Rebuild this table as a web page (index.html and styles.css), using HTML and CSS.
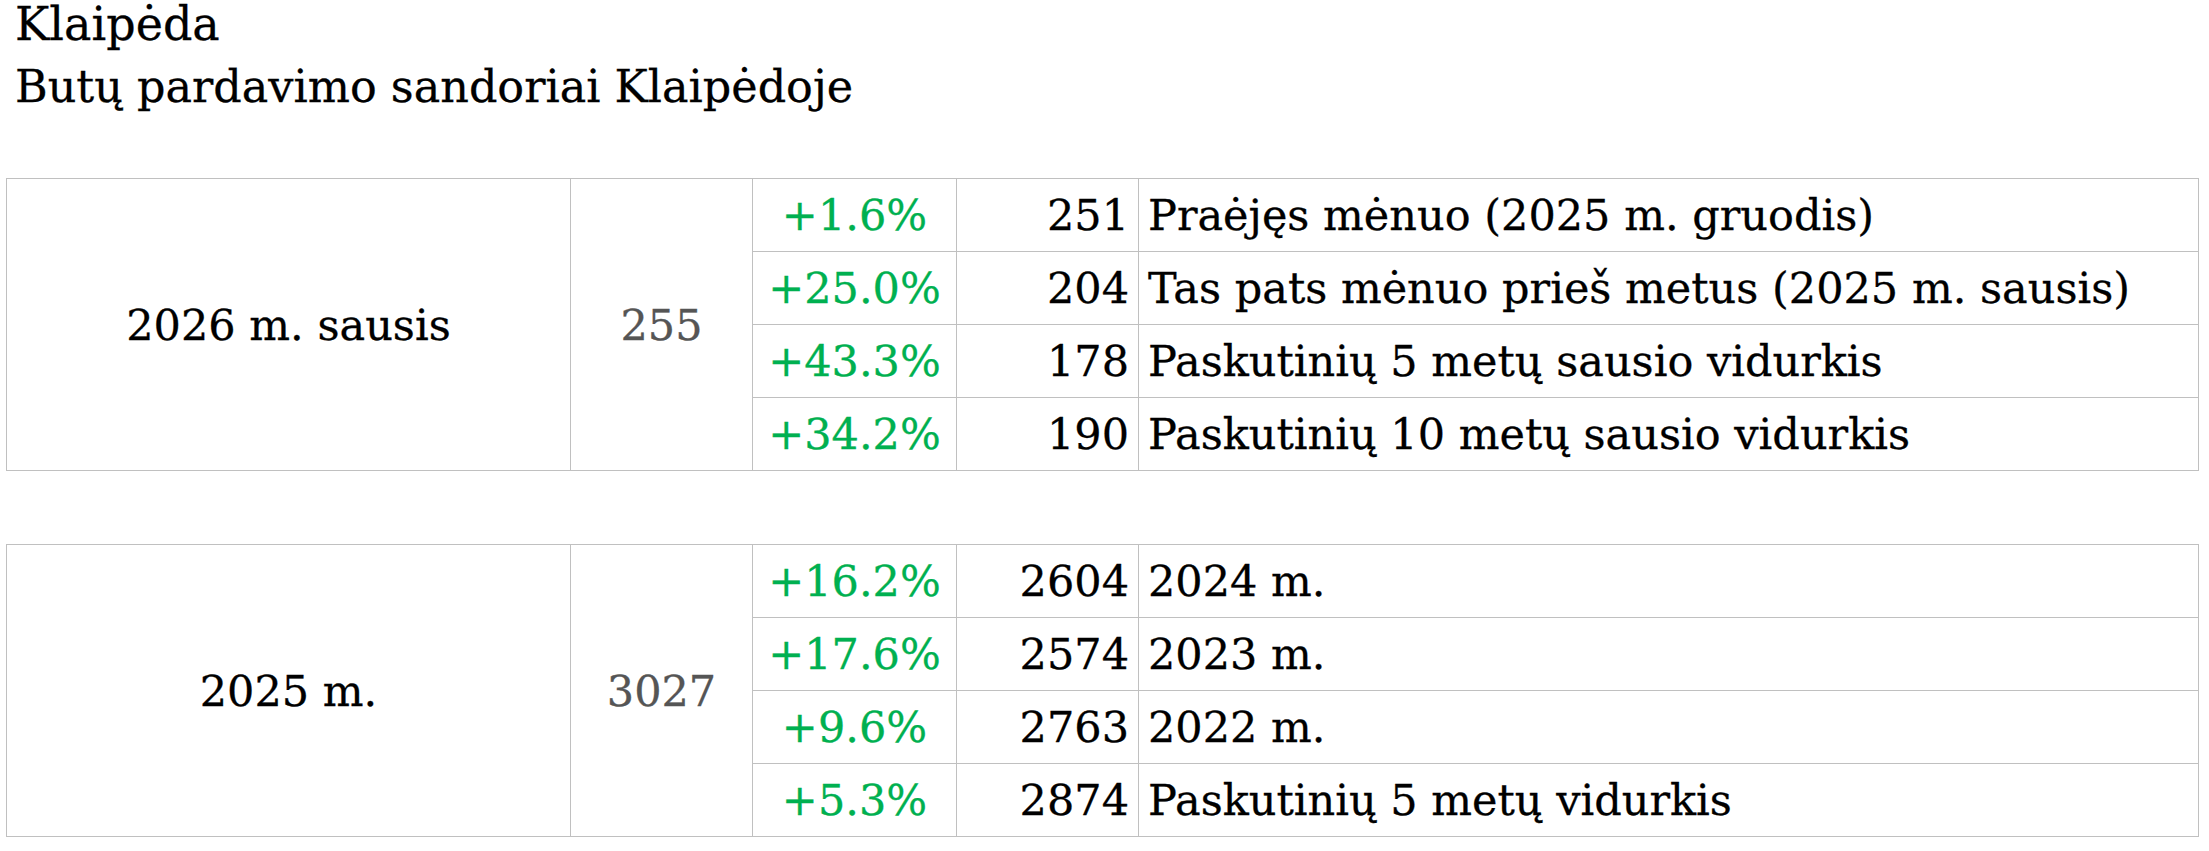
FILE: index.html
```html
<!DOCTYPE html>
<html lang="lt">
<head>
<meta charset="utf-8">
<title>Klaipėda</title>
<link rel="stylesheet" href="styles.css">
</head>
<body>
<header class="head">
  <div class="title">Klaipėda</div>
  <div class="subtitle">Butų pardavimo sandoriai Klaipėdoje</div>
</header>

<table class="stats">
  <colgroup>
    <col class="c-period"><col class="c-value"><col class="c-change"><col class="c-ref"><col class="c-label">
  </colgroup>
  <tbody>
    <tr>
      <td class="period" rowspan="4">2026 m. sausis</td>
      <td class="value" rowspan="4">255</td>
      <td class="change">+1.6%</td>
      <td class="ref">251</td>
      <td class="label">Praėjęs mėnuo (2025 m. gruodis)</td>
    </tr>
    <tr>
      <td class="change">+25.0%</td>
      <td class="ref">204</td>
      <td class="label">Tas pats mėnuo prieš metus (2025 m. sausis)</td>
    </tr>
    <tr>
      <td class="change">+43.3%</td>
      <td class="ref">178</td>
      <td class="label">Paskutinių 5 metų sausio vidurkis</td>
    </tr>
    <tr>
      <td class="change">+34.2%</td>
      <td class="ref">190</td>
      <td class="label">Paskutinių 10 metų sausio vidurkis</td>
    </tr>
  </tbody>
</table>

<table class="stats">
  <colgroup>
    <col class="c-period"><col class="c-value"><col class="c-change"><col class="c-ref"><col class="c-label">
  </colgroup>
  <tbody>
    <tr>
      <td class="period" rowspan="4">2025 m.</td>
      <td class="value" rowspan="4">3027</td>
      <td class="change">+16.2%</td>
      <td class="ref">2604</td>
      <td class="label">2024 m.</td>
    </tr>
    <tr>
      <td class="change">+17.6%</td>
      <td class="ref">2574</td>
      <td class="label">2023 m.</td>
    </tr>
    <tr>
      <td class="change">+9.6%</td>
      <td class="ref">2763</td>
      <td class="label">2022 m.</td>
    </tr>
    <tr>
      <td class="change">+5.3%</td>
      <td class="ref">2874</td>
      <td class="label">Paskutinių 5 metų vidurkis</td>
    </tr>
  </tbody>
</table>
</body>
</html>
```

FILE: styles.css
```css
html, body {
  margin: 0;
  padding: 0;
  background: #ffffff;
}

body {
  font-family: "DejaVu Serif", "Liberation Serif", serif;
  color: #000000;
  -webkit-text-stroke: 0.3px currentColor;
}

.head {
  padding-left: 15px;
}

.title {
  font-size: 46px;
  line-height: 48px;
}

.subtitle {
  font-size: 44.5px;
  line-height: 52px;
  margin-top: 13px;
}

.stats {
  border-collapse: collapse;
  table-layout: fixed;
  width: 2193px;
  margin-left: 6px;
  margin-top: 65px;
  font-size: 43px;
}

.stats + .stats {
  margin-top: 73px;
}

.c-period { width: 564px; }
.c-value { width: 182px; }
.c-change { width: 204px; }
.c-ref { width: 182px; }

.stats td {
  border: 1px solid #c0c0c0;
  height: 72px;
  padding: 0 9px 0 9px;
  vertical-align: middle;
  white-space: nowrap;
}

.period {
  text-align: center;
}

.value {
  text-align: center;
  color: #555555;
}

.change {
  text-align: center;
  color: #00b050;
}

.ref {
  text-align: right;
  padding-right: 8px;
}
```
